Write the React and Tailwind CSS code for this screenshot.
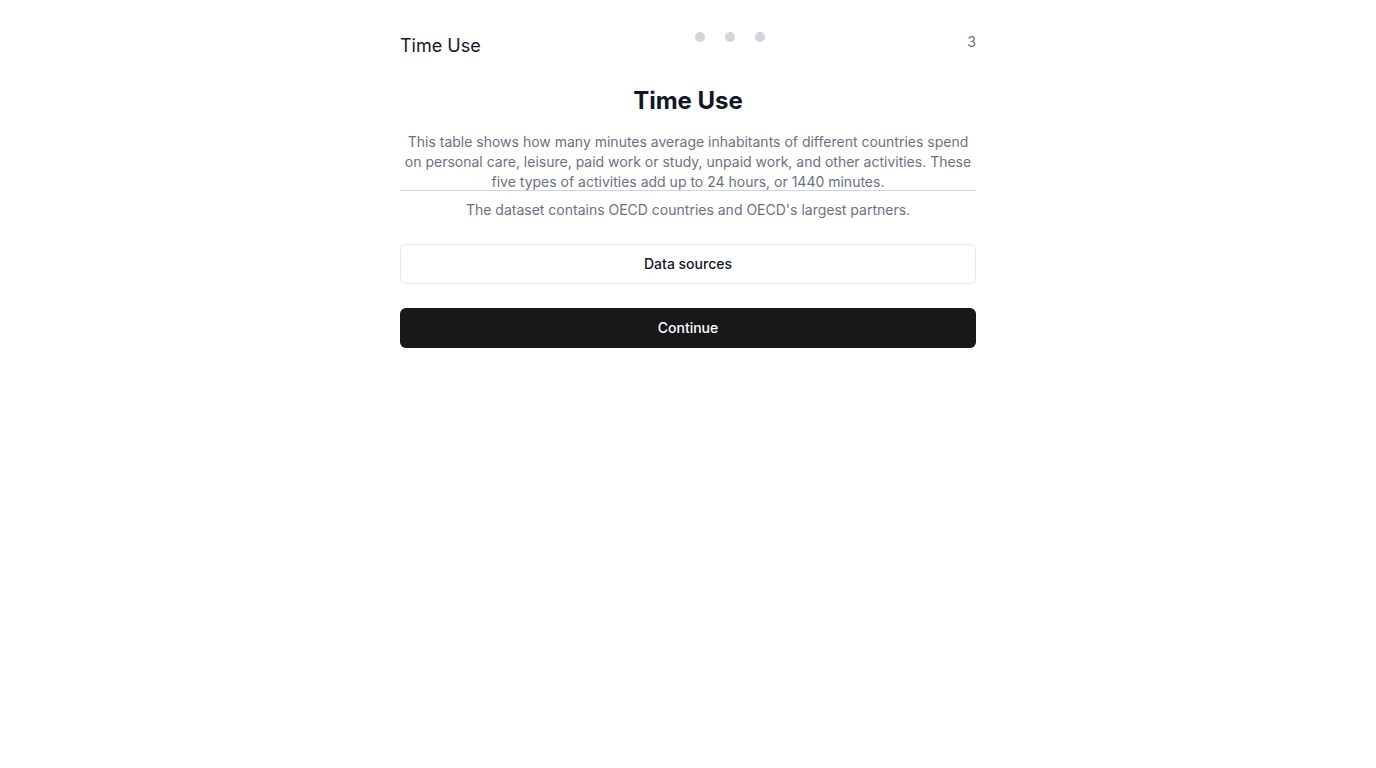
export default function App() {
  return (
    <div className="min-h-screen bg-white" style={{ fontFamily: "Inter, 'Noto Sans', sans-serif" }}>
      <div className="mx-auto w-[576px] pt-8">
        <div className="flex items-start justify-between">
          <div className="text-lg leading-7 text-gray-900">Time Use</div>
          <div className="flex gap-5 ml-[12px]">
            <span className="block h-2.5 w-2.5 rounded-full bg-gray-300"></span>
            <span className="block h-2.5 w-2.5 rounded-full bg-gray-300"></span>
            <span className="block h-2.5 w-2.5 rounded-full bg-gray-300"></span>
          </div>
          <div className="text-sm leading-5 text-gray-500">3</div>
        </div>
        <h1 className="mt-[25px] text-center text-2xl font-bold leading-8 text-gray-900">Time Use</h1>
        <p className="mt-[15px] text-center text-sm leading-5 text-gray-500">
          This table shows how many minutes average inhabitants of different countries spend on personal care, leisure, paid work or study, unpaid work, and other activities. These five types of activities add up to 24 hours, or 1440 minutes.
        </p>
        <hr className="-mt-[2px] border-gray-300" />
        <p className="mt-[9px] text-center text-sm leading-5 text-gray-500">
          The dataset contains OECD countries and OECD's largest partners.
        </p>
        <button className="mt-6 flex h-10 w-full items-center justify-center rounded-md border border-gray-200 bg-white text-sm font-medium text-gray-900">
          Data sources
        </button>
        <button className="mt-6 flex h-10 w-full items-center justify-center rounded-md bg-[#18181b] text-sm font-medium text-white">
          Continue
        </button>
      </div>
    </div>
  );
}
